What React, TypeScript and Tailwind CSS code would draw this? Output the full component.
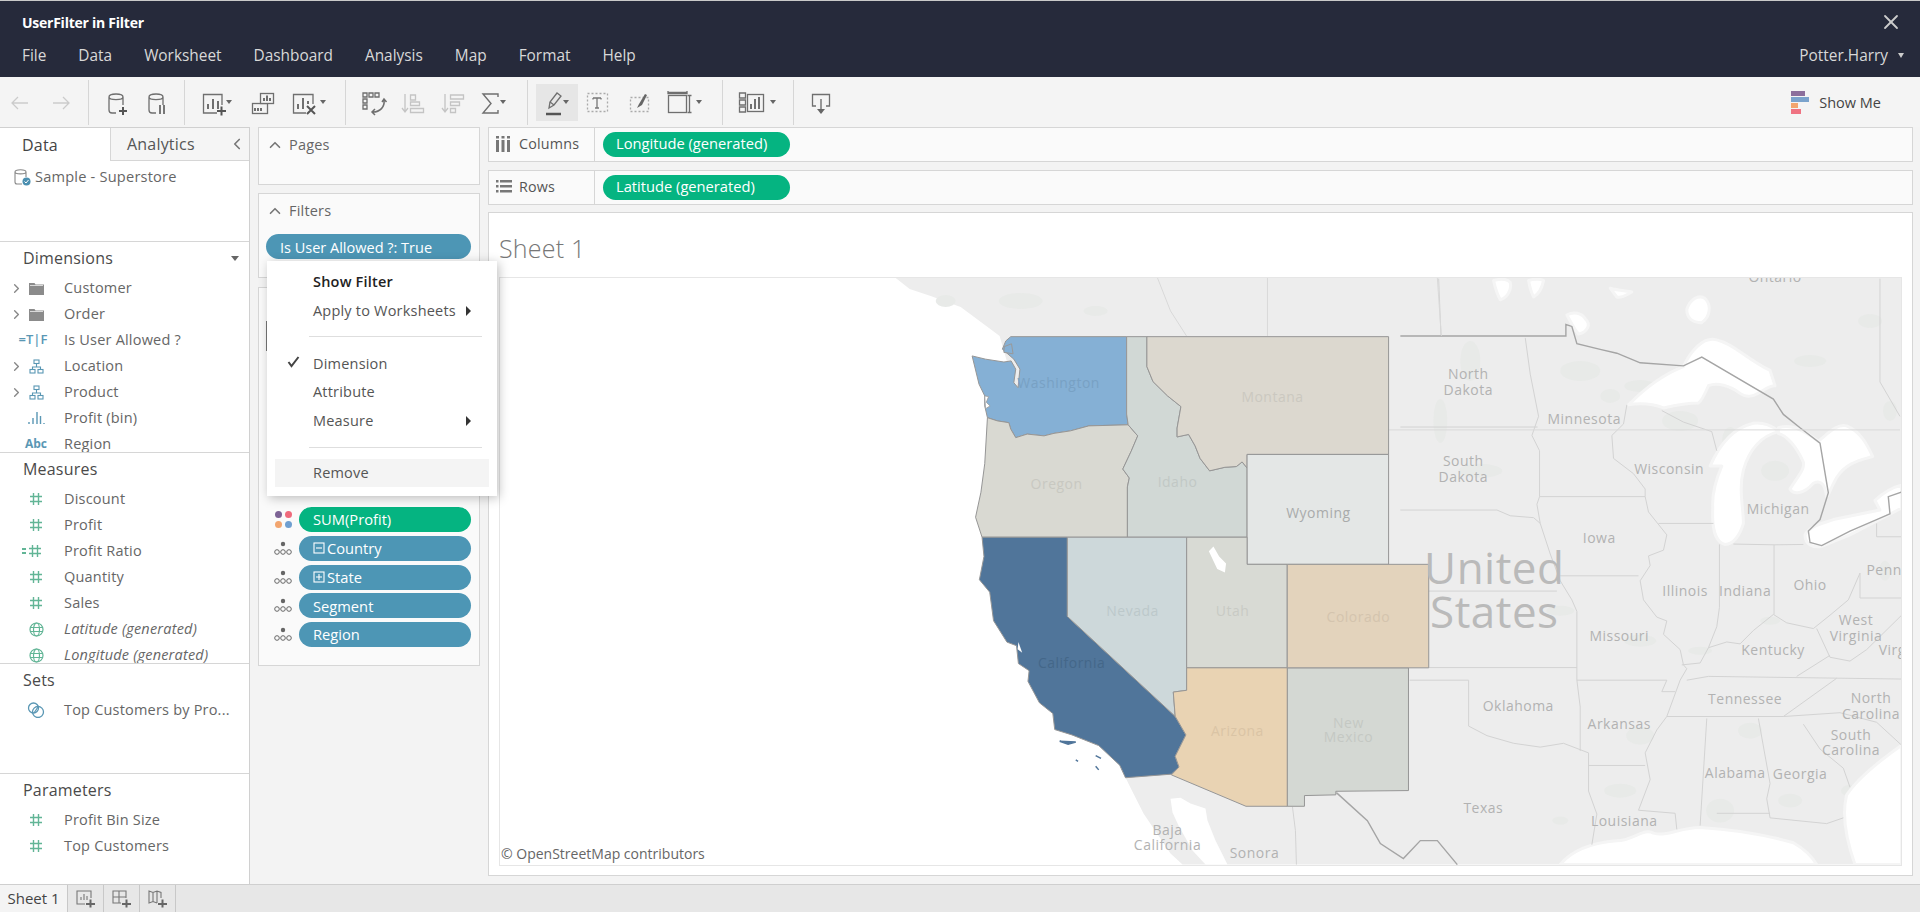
import { ChevronLeft, ChevronRight, ChevronUp, X } from 'lucide-react';
import type { ReactNode } from 'react';

const font = { fontFamily: '"Open Sans", "Noto Sans", sans-serif' };

function Svg({ children }: { children: ReactNode }) {
  return (
    <svg width="40" height="28" viewBox="0 0 40 28" fill="none" stroke="#6f6f6f" strokeWidth="1.3" className="overflow-visible">
      {children}
    </svg>
  );
}

function Caret({ x, y = 14 }: { x: number; y?: number }) {
  return <path d={`M${x - 3} ${y - 2}h6l-3 4z`} fill="#666" stroke="none" />;
}

function Sep() {
  return <div className="h-[45px] w-px shrink-0 self-start bg-[#d6d6d6]" />;
}

function Tool({ w, children }: { w: string; children?: ReactNode }) {
  return <div className={`flex h-[45px] shrink-0 items-center justify-center ${w}`}>{children}</div>;
}

function Toolbar() {
  return (
    <div className="flex h-[50px] items-start bg-[#f4f4f4] pt-[3px]">
      <Tool w="w-[40px]">
        <Svg><path d="M28 14H12M18 8l-6 6 6 6" stroke="#cbcbcb" /></Svg>
      </Tool>
      <Tool w="w-[42px]">
        <Svg><path d="M12 14h16M22 8l6 6-6 6" stroke="#cbcbcb" /></Svg>
      </Tool>
      <Tool w="w-[6px]" />
      <Sep />
      <Tool w="w-[54px]">
        <Svg>
          <path d="M13 8c0-4 14-4 14 0v8M13 8c0 3.5 14 3.5 14 0M13 8v13c0 2 1.500 3 3 3h4" />
          <path d="M23 22h8M27 18v8" stroke="#555" strokeWidth="2" />
        </Svg>
      </Tool>
      <Tool w="w-[26px]">
        <Svg>
          <path d="M13 8c0-4 14-4 14 0v8M13 8c0 3.500 14 3.500 14 0M13 8v13c0 2 1.500 3 3 3h4" />
          <path d="M24 16v9M28 16v9" stroke="#777" strokeWidth="2" />
        </Svg>
      </Tool>
      <Tool w="w-[15px]" />
      <Sep />
      <Tool w="w-[64px]">
        <Svg>
          <path d="M20 24H6.500V5.500H25V16" />
          <path d="M11 20v-5M16 20V10M21 20V12" strokeWidth="2" />
          <path d="M20 22h9M24.500 17.500v9" stroke="#555" strokeWidth="2" />
          <Caret x={32} y={13} />
        </Svg>
      </Tool>
      <Tool w="w-[26px]">
        <Svg>
          <rect x="10.500" y="14.500" width="15" height="10" />
          <rect x="18.500" y="4.500" width="13" height="10" fill="#f4f4f4" />
          <path d="M22 12V9M25 12V6.500M28 12V9M13 22v-3M16 22v-3M19 22v-3" strokeWidth="2" />
        </Svg>
      </Tool>
      <Tool w="w-[54px]">
        <Svg>
          <path d="M24 24H11.500V5.500H31V15" />
          <path d="M16 20v-5M21 20V9M26 15v-3" strokeWidth="2" />
          <path d="M25 17l8 8M33 17l-8 8" stroke="#555" strokeWidth="2" />
          <Caret x={41} y={13} />
        </Svg>
      </Tool>
      <Tool w="w-[16px]" />
      <Sep />
      <Tool w="w-[54px]">
        <Svg>
          <path d="M10 4h4v4h-4zM16 4h4v4h-4zM22 4h4v4h-4zM10 10h4v4h-4zM10 16h4v4h-4z" />
          <path d="M31 11c1 7-4 12-11 12M29 13l2-3 2.500 3M22 20l-3 3 3 3" strokeWidth="1.500" />
        </Svg>
      </Tool>
      <Tool w="w-[26px]">
        <Svg>
          <path d="M12 5v17M9 19l3 4 3-4" stroke="#c4c4c4" />
          <path d="M17.500 6h5v5h-5zM17.500 13h9v3.500h-9zM17.500 19.500h13v4h-13z" stroke="#c4c4c4" />
        </Svg>
      </Tool>
      <Tool w="w-[54px]">
        <Svg>
          <path d="M12 5v17M9 19l3 4 3-4" stroke="#c4c4c4" />
          <path d="M17.500 6h13v4h-13zM17.500 13h9v3.500h-9zM17.500 19.500h5v4h-5z" stroke="#c4c4c4" />
        </Svg>
      </Tool>
      <Tool w="w-[20px]">
        <Svg>
          <path d="M28 8V5H13l8 9.500-8 9.500h15v-3" strokeWidth="1.400" />
          <Caret x={33} y={13} />
        </Svg>
      </Tool>
      <Tool w="w-[27px]" />
      <Sep />
      <Tool w="w-[8px]" />
      <div className="-mt-[2px] flex h-[37px] w-[42px] shrink-0 translate-y-[6px] items-center justify-center bg-[#e6e6e6]">
        <Svg>
          <path d="M12 19l1-6 7-9 4 3-7 9z" />
          <path d="M13 13l4 3" />
          <path d="M9 25h15" stroke="#555" strokeWidth="2.500" />
          <Caret x={29} y={13} />
        </Svg>
      </div>
      <Tool w="w-[38px]">
        <Svg>
          <rect x="10.500" y="4.500" width="20" height="18" stroke="#aaa" strokeDasharray="2 2" />
          <path d="M16 9h8M16 9v1.500M24 9v1.500M20 9v10M18 19h4" stroke="#777" />
        </Svg>
      </Tool>
      <Tool w="w-[46px]">
        <Svg>
          <rect x="11.500" y="8.500" width="18" height="14" stroke="#aaa" strokeDasharray="2 2" />
          <path d="M18 19l2-4 6-10 2 1-5 10z" fill="#666" stroke="none" />
        </Svg>
      </Tool>
      <Tool w="w-[46px]">
        <Svg>
          <rect x="3.500" y="6.500" width="18" height="17" />
          <path d="M3 2v2.500h19V2M3 3.500h19M24.500 6.500v17M22.500 6.500h4M22.500 23.500h4" />
          <Caret x={34} y={13} />
        </Svg>
      </Tool>
      <Tool w="w-[14px]" />
      <Sep />
      <Tool w="w-[54px]">
        <Svg>
          <path d="M9.500 4h6v5h-6zM9.500 11h6v5h-6zM9.500 18h6v5h-6z" />
          <rect x="17.500" y="5.500" width="16" height="17" />
          <path d="M21 20v-5M25 20V10M29 20V8" strokeWidth="2" />
          <Caret x={43} y={13} />
        </Svg>
      </Tool>
      <Tool w="w-[16px]" />
      <Sep />
      <Tool w="w-[54px]">
        <Svg>
          <path d="M15 17h-3.500V5.500h17V17H25" />
          <path d="M20 10v14" strokeWidth="1.400" />
          <path d="M16 20h8l-4 5z" fill="#666" stroke="none" />
        </Svg>
      </Tool>
      <div className="ml-auto mr-[39px] mt-[11px] flex items-center gap-[10px]">
        <div className="flex w-[18px] flex-col gap-px">
          <div className="h-[5px] w-[14px] bg-[#8c6f9c]" />
          <div className="h-[5px] w-[18px] bg-[#7ba3cc]" />
          <div className="h-[5px] w-[7px] bg-[#f2a56f]" />
          <div className="h-[5px] w-[10px] bg-[#ef7382]" />
        </div>
        <span className="text-[14.500px] text-[#444]">Show Me</span>
      </div>
    </div>
  );
}

function Hash() {
  return (
    <svg width="14" height="14" viewBox="0 0 14 14" stroke="#62b596" strokeWidth="1.400" fill="none">
      <path d="M4.500 1v12M9.500 1v12M1 4.500h12M1 9.500h12" />
    </svg>
  );
}

function Globe() {
  return (
    <svg width="15" height="15" viewBox="0 0 15 15" stroke="#62b596" strokeWidth="1.200" fill="none">
      <circle cx="7.500" cy="7.500" r="6.500" />
      <ellipse cx="7.500" cy="7.500" rx="3" ry="6.500" />
      <path d="M1 5.500h13M1 9.500h13" />
    </svg>
  );
}

function Folder() {
  return (
    <svg width="15" height="13" viewBox="0 0 15 13" fill="#8b8b8b">
      <path d="M0 1h5.500l1 1.500H15V13H0z" />
      <path d="M1 3.500h13" stroke="#d9d9d9" />
    </svg>
  );
}

function Hier() {
  return (
    <svg width="15" height="15" viewBox="0 0 15 15" stroke="#5a97b4" strokeWidth="1.100" fill="none">
      <rect x="5" y="1" width="5" height="3.500" />
      <rect x="1" y="10.500" width="5" height="3.500" />
      <rect x="9" y="10.500" width="5" height="3.500" />
      <path d="M7.500 4.500v3.500M3.500 10.500V8h8v2.500" />
    </svg>
  );
}

function Row({ icon, label, caret, italic }: { icon: ReactNode; label: string; caret?: boolean; italic?: boolean }) {
  return (
    <div className="flex h-[26px] items-center pt-[2px]">
      <div className="flex w-[26px] justify-end">
        {caret && <ChevronRight size={15} strokeWidth={2.200} className="mr-[2px] text-[#888]" />}
      </div>
      <div className="flex w-[20px] justify-center">{icon}</div>
      <span className={`ml-[18px] text-[14.500px] tracking-[0.2px] text-[#666] ${italic ? 'italic' : ''}`}>{label}</span>
    </div>
  );
}

function Section({ title, h, children, arrow }: { title: string; h: string; children: ReactNode; arrow?: boolean }) {
  return (
    <div className={`overflow-hidden border-t border-[#d6d6d6] ${h}`}>
      <div className="flex h-[32px] items-center pl-[23px] pr-[10px] text-[16px] tracking-[0.2px] text-[#4a4a4a]">
        {title}
        {arrow && <div className="ml-auto h-0 w-0 border-x-[4px] border-t-[5px] border-x-transparent border-t-[#666]" />}
      </div>
      {children}
    </div>
  );
}

function DataPane() {
  return (
    <div className="flex w-[250px] shrink-0 flex-col border-r border-t border-[#d0d0d0] bg-white">
      <div className="flex h-[33px] shrink-0">
        <div className="flex w-[110px] items-center pl-[22px] text-[16px] tracking-[0.2px] text-[#444]">Data</div>
        <div className="flex flex-1 items-center border-b border-l border-[#d6d6d6] bg-[#f5f5f5] pl-[16px] text-[16px] tracking-[0.2px] text-[#555]">
          Analytics
          <ChevronLeft size={18} strokeWidth={2.200} className="ml-auto mr-[3px] text-[#777]" />
        </div>
      </div>
      <div className="flex h-[80px] shrink-0 items-start pl-[14px] pt-[7px]">
        <svg width="18" height="18" viewBox="0 0 18 18" fill="none" stroke="#888" strokeWidth="1.100">
          <path d="M1 4c0-3 11-3 11 0v5M1 4c0 2.500 11 2.500 11 0M1 4v10c0 1.500 1 2 2 2h5" />
          <circle cx="12.500" cy="13.500" r="4" fill="#4b8fb0" stroke="none" />
          <path d="M10.500 13.500l1.500 1.500 2.500-3" stroke="#fff" strokeWidth="1" />
        </svg>
        <span className="-mt-px ml-[3px] text-[14.600px] leading-[18px] tracking-[0.2px] text-[#666]">Sample - Superstore</span>
      </div>
      <Section title="Dimensions" h="h-[211px]" arrow>
        <Row caret icon={<Folder />} label="Customer" />
        <Row caret icon={<Folder />} label="Order" />
        <Row icon={<span className="-ml-[6px] text-[13px] font-semibold text-[#5a97b4]">=T|F</span>} label="Is User Allowed ?" />
        <Row caret icon={<Hier />} label="Location" />
        <Row caret icon={<Hier />} label="Product" />
        <Row
          icon={
            <svg width="18" height="14" viewBox="0 0 18 14" stroke="#5a97b4" strokeWidth="1.400">
              <path d="M2 13v-2M6 13V7M10 13V1M13.500 13V5M17 13v-1" />
            </svg>
          }
          label="Profit (bin)"
        />
        <Row icon={<span className="text-[12px] font-bold text-[#5a97b4]">Abc</span>} label="Region" />
      </Section>
      <Section title="Measures" h="h-[211px]">
        <Row icon={<Hash />} label="Discount" />
        <Row icon={<Hash />} label="Profit" />
        <Row
          icon={
            <span className="-ml-[8px] flex items-center gap-[2px]">
              <span className="h-[6px] w-[4px] border-y-2 border-[#62b596]" />
              <Hash />
            </span>
          }
          label="Profit Ratio"
        />
        <Row icon={<Hash />} label="Quantity" />
        <Row icon={<Hash />} label="Sales" />
        <Row italic icon={<Globe />} label="Latitude (generated)" />
        <Row italic icon={<Globe />} label="Longitude (generated)" />
      </Section>
      <Section title="Sets" h="h-[110px]">
        <Row
          icon={
            <svg width="18" height="16" viewBox="0 0 18 16" fill="none" stroke="#5a97b4" strokeWidth="1.300">
              <circle cx="6.500" cy="6" r="5" />
              <circle cx="11" cy="10" r="5.500" />
              <path d="M7 11l4-6" />
            </svg>
          }
          label="Top Customers by Pro..."
        />
      </Section>
      <Section title="Parameters" h="flex-1">
        <Row icon={<Hash />} label="Profit Bin Size" />
        <Row icon={<Hash />} label="Top Customers" />
      </Section>
    </div>
  );
}

function Card({ h, title, children }: { h: string; title?: string; children?: ReactNode }) {
  return (
    <div className={`border border-[#d6d6d6] bg-[#fafafa] ${h}`}>
      {title && (
        <div className="flex h-[33px] items-center pl-[7px] text-[14.500px] tracking-[0.2px] text-[#666]">
          <ChevronUp size={18} strokeWidth={2.200} className="mr-[5px] text-[#777]" />
          {title}
        </div>
      )}
      {children}
    </div>
  );
}

function Detail() {
  return (
    <svg width="18" height="15" viewBox="0 0 18 15" fill="none" stroke="#666" strokeWidth="1">
      <circle cx="9" cy="3" r="2.200" fill="#666" stroke="none" />
      <circle cx="3" cy="11" r="2.300" />
      <circle cx="9" cy="11" r="2.300" />
      <circle cx="15" cy="11" r="2.300" />
    </svg>
  );
}

function Pill({ label, green, icon }: { label: string; green?: boolean; icon?: ReactNode }) {
  return (
    <div className={`flex h-[25px] w-[172px] items-center rounded-full pl-[14px] text-[14.700px] leading-none text-white ${green ? 'bg-[#05b481]' : 'bg-[#4d96b5]'}`}>
      {icon}
      {label}
    </div>
  );
}

function MarkRow({ icon, ...p }: { icon: ReactNode; label: string; green?: boolean; icon2?: ReactNode }) {
  return (
    <div className="flex items-center">
      <div className="flex w-[32px] justify-center">{icon}</div>
      <Pill label={p.label} green={p.green} icon={p.icon2} />
    </div>
  );
}

function MiddlePane() {
  return (
    <div className="ml-[8px] flex w-[222px] shrink-0 flex-col">
      <Card h="h-[58px]" title="Pages" />
      <Card h="mt-[8px] h-[85px]" title="Filters">
        <div className="ml-[7px] mt-[7px] flex h-[25px] w-[205px] items-center rounded-full bg-[#4d96b5] pl-[14px] pt-[2px] text-[14.500px] text-white">
          Is User Allowed ?: True
        </div>
      </Card>
      <Card h="mt-[9px] h-[379px]">
        <div className="ml-[7px] mt-[33px] h-[30px] w-0 border-l border-[#777]" />
        <div className="mt-[156px] flex flex-col gap-[3.800px] pl-[8px]">
          <MarkRow
            green
            label="SUM(Profit)"
            icon={
              <div className="grid grid-cols-2 gap-[3px]">
                <div className="h-[7px] w-[7px] rounded-full bg-[#7d6395]" />
                <div className="h-[7px] w-[7px] rounded-full bg-[#ef6a7c]" />
                <div className="h-[7px] w-[7px] rounded-full bg-[#f2a56f]" />
                <div className="h-[7px] w-[7px] rounded-full bg-[#6f9fd0]" />
              </div>
            }
          />
          <MarkRow
            label="Country"
            icon={<Detail />}
            icon2={
              <svg width="12" height="12" viewBox="0 0 12 12" fill="none" stroke="#fff" strokeWidth="1.100" className="mr-[2px]">
                <rect x="1" y="1" width="10" height="10" />
                <path d="M3 6h6" />
              </svg>
            }
          />
          <MarkRow
            label="State"
            icon={<Detail />}
            icon2={
              <svg width="12" height="12" viewBox="0 0 12 12" fill="none" stroke="#fff" strokeWidth="1.100" className="mr-[2px]">
                <rect x="1" y="1" width="10" height="10" />
                <path d="M3 6h6M6 3v6" />
              </svg>
            }
          />
          <MarkRow label="Segment" icon={<Detail />} />
          <MarkRow label="Region" icon={<Detail />} />
        </div>
      </Card>
    </div>
  );
}

function MenuItem({ label, bold, check, sub, hi }: { label: string; bold?: boolean; check?: boolean; sub?: boolean; hi?: boolean }) {
  return (
    <div className={`relative flex h-[28px] items-center pl-[38px] pr-[18px] text-[14.500px] tracking-[0.2px] ${bold ? 'font-semibold text-[#222]' : 'text-[#555]'} ${hi ? 'bg-[#f4f4f4]' : ''}`}>
      {check && (
        <svg width="13" height="12" viewBox="0 0 13 12" className="absolute left-[12px] top-[6px]" fill="none" stroke="#444" strokeWidth="2">
          <path d="M1.500 6l3 4 7-9" />
        </svg>
      )}
      {label}
      {sub && <div className="ml-auto h-0 w-0 border-y-[5px] border-l-[5px] border-y-transparent border-l-[#333]" />}
    </div>
  );
}

function ContextMenu() {
  return (
    <div className="absolute left-[267px] top-[261px] z-10 h-[235px] w-[230px] bg-white pt-[7px] shadow-[2px_2px_10px_rgba(0,0,0,0.25)]">
      <div className="px-[8px]">
        <MenuItem bold label="Show Filter" />
        <div className="mt-px"><MenuItem sub label="Apply to Worksheets" /></div>
        <div className="ml-[34px] mr-[7px] mt-[11px] h-px bg-[#dedede]" />
        <div className="mt-[13px]"><MenuItem check label="Dimension" /></div>
        <MenuItem label="Attribute" />
        <div className="mt-px"><MenuItem sub label="Measure" /></div>
        <div className="ml-[34px] mr-[7px] mt-[12px] h-px bg-[#dedede]" />
        <div className="mt-[11px]"><MenuItem hi label="Remove" /></div>
      </div>
    </div>
  );
}

function Shelf({ icon, title, pill, mt }: { icon: ReactNode; title: string; pill: string; mt?: string }) {
  return (
    <div className={`flex h-[35px] border border-[#d6d6d6] bg-[#fafafa] ${mt ?? ''}`}>
      <div className="flex w-[106px] items-center border-r border-[#d6d6d6] pb-[2px] pl-[7px] text-[14.300px] tracking-[0.2px] text-[#555]">
        <div className="flex w-[23px] justify-start">{icon}</div>
        {title}
      </div>
      <div className="ml-[8px] mt-[4px] flex h-[25px] w-[187px] items-center rounded-full bg-[#05b481] pb-[2px] pl-[13px] text-[14.700px] text-white">
        {pill}
      </div>
    </div>
  );
}

// numbers below are measured off the picture, hence the two transforms on the groups
const g4 = 'translate(880 270) scale(0.3827 0.3571)';
const g5 = 'translate(1400 270) scale(0.3333 0.3827)';

const waOrBorder = 'L279,411 L305,420 L335,425 L340,443 L353,467 L383,457 L427,462 L453,455 L496,448 L544,434 L647,431';
const idMtBorder = 'L696,268 L712,310 L750,350 L785,380 L775,440 L775,465 L805,458 L822,490 L835,525 L860,560 L900,550 L930,548 L945,535 L958,552';
const idMtBack = 'L945,535 L930,548 L900,550 L860,560 L835,525 L822,490 L805,458 L775,465 L775,440 L785,380 L750,350 L712,310 L696,268';

const states = [
  { d: 'M1063,1112 L1380,1112 L1380,1456 L1190,1458 L1190,1468 L1108,1470 L1108,1500 L1063,1500 Z', c: '#d4d8d3' },
  { d: 'M340,184 L643,184 L643,401 L647,431 L544,434 L496,448 L453,455 L427,462 L383,457 L353,467 L340,443 L335,425 L305,420 L279,411 L272,378 L272,350 L257,317 L239,238 L274,247 L322,255 L341,252 L353,275 L348,313 L359,327 L364,275 L348,247 L318,219 L327,196 Z', c: '#85b0d5' },
  { d: `M279,411 ${waOrBorder} L672,462 L655,505 L633,555 L650,580 L645,605 L645,746 L265,746 L248,690 L262,620 L272,540 Z`, c: '#d9d9d2' },
  { d: `M643,184 L696,184 ${idMtBorder} L958,746 L645,746 L645,605 L650,580 L633,555 L655,505 L672,462 L647,431 L643,401 Z`, c: '#d1d8d5' },
  { d: `M696,184 L1328,184 L1328,514 L958,514 L958,552 ${idMtBack} Z`, c: '#dcd8cf' },
  { d: 'M958,514 L1328,514 L1328,822 L958,822 Z', c: '#e4e7e6' },
  { d: 'M265,746 L488,746 L488,968 L770,1248 L798,1300 L770,1360 L780,1390 L760,1410 L640,1420 L625,1385 L570,1330 L500,1300 L455,1285 L450,1240 L415,1210 L385,1150 L388,1120 L360,1100 L355,1050 L330,1040 L295,980 L285,900 L258,865 L270,800 Z', c: '#50759a' },
  { d: 'M488,746 L800,746 L800,1175 L765,1180 L770,1248 L488,968 Z', c: '#cdd8da' },
  { d: 'M800,746 L958,746 L958,822 L1063,822 L1063,1112 L800,1112 Z', c: '#d8dad4' },
  { d: 'M1063,822 L1433,822 L1433,1112 L1063,1112 Z', c: '#e3d3bc' },
  { d: 'M800,1112 L1063,1112 L1063,1500 L955,1500 L760,1412 L780,1390 L770,1360 L798,1300 L770,1248 L765,1180 L800,1175 Z', c: '#e9d3b3' },
];

const lakes = [
  'M685,350 C730,310 790,270 850,250 C870,210 910,170 950,180 C1000,190 1040,230 1110,260 L1125,300 C1090,300 1060,345 1020,320 C990,300 950,290 925,300 C915,320 905,340 895,345 C860,345 830,350 790,358 C750,345 720,345 685,350 Z',
  'M930,510 C960,450 1000,410 1060,398 C1090,395 1120,405 1135,420 C1090,430 1050,460 1030,520 C1015,570 1030,620 1030,660 C1020,690 1000,715 975,715 C945,710 935,670 938,620 C935,580 950,540 965,510 C950,510 940,510 930,510 Z',
  'M1135,410 C1170,400 1200,410 1255,445 C1290,420 1310,400 1340,405 C1380,420 1400,450 1418,485 C1380,495 1340,500 1310,540 C1290,570 1285,590 1280,590 C1275,560 1265,545 1240,555 C1210,585 1180,585 1170,570 C1190,540 1215,520 1210,500 C1190,460 1160,430 1135,425 Z',
  'M1215,690 C1230,665 1270,660 1300,650 L1440,625 L1425,600 C1450,580 1480,565 1505,560 L1505,620 L1350,690 L1265,720 C1240,725 1215,715 1215,690 Z',
  'M280,25 C300,20 320,20 330,30 C335,50 320,70 300,75 C290,60 285,45 280,25 Z',
  'M385,25 C400,20 420,20 430,25 C425,45 415,60 400,68 C392,55 388,40 385,25 Z',
  'M860,100 C870,75 895,60 915,72 C935,90 930,120 905,135 C880,135 860,125 860,100 Z',
  'M630,45 C650,50 675,52 695,55 C680,62 665,72 650,68 Z',
  'M500,115 C520,105 545,110 555,125 C575,140 560,160 535,165 C520,150 510,130 500,115 Z',
  'M480,1552 C520,1510 580,1495 650,1490 C700,1490 730,1455 760,1470 C800,1480 840,1455 900,1455 C1000,1460 1100,1475 1180,1495 C1210,1510 1235,1530 1250,1552 Z',
  'M1505,1240 C1440,1280 1370,1330 1340,1370 C1325,1420 1340,1490 1365,1552 L1505,1552 Z',
];

const stateLines = [
  'M0,408 L412,408',
  'M375,175 L390,270 L415,380 L395,430 L418,470 L418,590 L410,610 L420,660 L450,740 L480,810 L515,860 L530,890 L530,1070 L540,1140 L540,1255',
  'M0,625 L290,625 L330,640 L400,645 L420,660',
  'M80,837 L470,837',
  'M85,1037 L530,1037',
  'M28,1070 L205,1070 L205,1190 L260,1215 L340,1235 L420,1245 L490,1235 L565,1260 L565,1360 L590,1420 L575,1500',
  'M418,590 L735,590',
  'M480,797 L715,797',
  'M530,1070 L800,1070 L785,1100 L825,1100',
  'M565,1293 L735,1293',
  'M680,350 L670,400 L635,430 L640,490 L700,530 L735,570 L735,590 L745,630 L800,690 L790,730 L745,745 L750,770 L720,810 L730,860 L770,905 L800,915 L790,950 L840,990 L850,1030 L860,1040 L840,1070 L800,1165 L770,1200 L735,1260 L750,1330 L715,1410 L825,1418 L830,1460',
  'M785,365 L850,395 L935,420 L950,470',
  'M775,660 L940,660',
  'M1000,714 L1122,716 L1210,715',
  'M958,715 L958,880 L950,930 L925,985 L980,970 L1020,975 L1060,940 L1120,898 L1160,920 L1240,935 L1290,900 L1345,860 L1380,790 L1380,855 L1505,855',
  'M1122,716 L1122,898',
  'M845,1030 L900,1025 L925,985',
  'M860,1070 L925,1060 L1505,1067',
  'M800,1165 L1150,1165 L1310,1065',
  'M1150,1165 L1320,1155 L1430,1180 L1505,1240',
  'M1210,1185 L1260,1250 L1330,1300 L1350,1350',
  'M920,1170 L900,1450',
  'M1075,1170 L1110,1340 L1100,1380 L1110,1430 L1280,1445 L1330,1430',
  'M950,1418 L1110,1418',
  'M1250,935 L1290,1010 L1350,1020 L1400,990 L1505,900',
  'M1430,695 L1505,695 M1430,660 L1430,695',
  'M1440,20 L1440,290 L1500,380',
  'M115,20 L122,170',
  'M1190,1060 L1290,1005',
];

const blobs = [
  [1020, 300, 22, 8], [945, 300, 10, 6], [1095, 310, 12, 5], [1310, 480, 18, 12], [1360, 520, 10, 20], [1290, 540, 20, 7],
  [1470, 360, 10, 20], [1580, 370, 20, 10], [1610, 395, 10, 7], [1680, 420, 18, 10], [1730, 440, 8, 14], [1640, 385, 16, 6],
  [1480, 470, 22, 7], [1440, 420, 7, 22], [1560, 610, 14, 5], [1640, 640, 16, 6], [1640, 735, 14, 9], [1750, 730, 12, 8],
  [1620, 790, 16, 7], [1720, 810, 14, 12], [1790, 800, 12, 7], [1850, 790, 9, 6], [1700, 650, 12, 4], [1770, 620, 10, 4],
  [1775, 470, 14, 10], [1890, 410, 7, 10], [1885, 570, 6, 10], [1810, 360, 16, 6], [1870, 320, 12, 7], [1560, 820, 8, 4],
];

const labels: [string, number, number, number?, string?][] = [
  ['North', 1468, 378], ['Dakota', 1468, 394], ['South', 1463, 465], ['Dakota', 1463, 481], ['Minnesota', 1584, 423],
  ['Wisconsin', 1669, 473], ['Michigan', 1778, 513], ['Iowa', 1599, 542], ['Illinois', 1685, 595], ['Indiana', 1745, 595],
  ['Ohio', 1810, 589], ['Pennsylvania', 1912, 574], ['Missouri', 1619, 640], ['Kentucky', 1773, 654], ['West', 1856, 624],
  ['Virginia', 1856, 640], ['Virginia', 1905, 654], ['Oklahoma', 1518, 710], ['Tennessee', 1745, 703], ['North', 1871, 702],
  ['Carolina', 1871, 718], ['South', 1851, 739], ['Carolina', 1851, 754], ['Arkansas', 1619, 728], ['Alabama', 1735, 777],
  ['Georgia', 1800, 778], ['Texas', 1483, 812], ['Louisiana', 1624, 825], ['Baja', 1167, 834], ['California', 1167, 849],
  ['Sonora', 1254, 857], ['Ontario', 1775, 281], ['Wyoming', 1318, 517, 14, '#a9abab'], ['United', 1494, 583, 44, '#bababa'], ['States', 1494, 627, 44, '#bababa'],
  ['Washington', 1058, 387, 14, '#78a1c4'], ['Montana', 1272, 401, 14, '#cbc8c0'], ['Oregon', 1056, 488, 14, '#c8c8c1'], ['Idaho', 1177, 486, 14, '#c1c8c5'],
  ['Nevada', 1132, 615, 14, '#bcc8ca'], ['Utah', 1232, 615, 14, '#c8cac4'], ['Colorado', 1358, 621, 14, '#d4c4ae'], ['California', 1071, 667, 14, '#446789'],
  ['Arizona', 1237, 735, 14, '#dac4a5'], ['New', 1348, 727, 14, '#c4c8c3'], ['Mexico', 1348, 741, 14, '#c4c8c3'],
];

function MapChart() {
  return (
    <svg viewBox="499 277 1402 587" className="h-full w-full" preserveAspectRatio="none">
      <path d="M895,277 L1901,277 L1901,864 L1182,864 L1170,853 L1143,813 L1133,793 L1125,777 L999,335 L991,329 L960,306 L930,295 L909,288 Z" fill="#ededed" />
      {blobs.map(([cx, cy, rx, ry], i) => (
        <ellipse key={i} cx={cx} cy={cy} rx={rx} ry={ry} fill="#e8eae8" />
      ))}
      <path d="M1170,798 L1180,797 L1190,803 L1205,808 L1207,820 L1215,840 L1227,864 L1205,864 L1192,850 L1178,825 L1172,812 Z" fill="#fff" />
      <g transform={g5}>
        {lakes.map((d) => (
          <path key={d} d={d} fill="#fff" stroke="#f5f5f5" strokeWidth="3" strokeLinejoin="round" vectorEffect="non-scaling-stroke" />
        ))}
        {stateLines.map((d) => (
          <path key={d} d={d} fill="none" stroke="#d3d3d3" strokeWidth="1" vectorEffect="non-scaling-stroke" />
        ))}
        <path
          d="M0,170 L497,170 L497,140 L515,145 L530,190 L600,205 L650,215 L720,240 L850,248 L905,225 L1120,335 L1150,375 L1200,410 L1260,450 L1285,580 L1260,650 L1225,680 L1230,710 L1265,718 L1350,680 L1470,635 L1465,590 L1505,578"
          fill="none"
          stroke="#a5a5a5"
          strokeWidth="1.400"
          vectorEffect="non-scaling-stroke"
        />
      </g>
      <path d="M1336,792 L1367,820 L1380,843 L1403,858 L1420,840 L1437,840 L1457,864" fill="none" stroke="#a5a5a5" strokeWidth="1.400" />
      <path d="M1292,806 L1295,830 L1296,864" fill="none" stroke="#d3d3d3" />
      <path d="M1157,277 L1170,310 L1186,335 M1267,277 L1267,335 M1437,277 L1441,335 M1386,490 L1386,335 M1386,429 L1900,429" fill="none" stroke="#d9d9d9" />
      <g transform={g4}>
        {states.map((s) => (
          <path key={s.d} d={s.d} fill={s.c} stroke="#969696" strokeWidth="1" vectorEffect="non-scaling-stroke" />
        ))}
        <path d="M858,785 L870,772 L885,800 L903,820 L900,845 L880,835 Z" fill="#fff" />
        <path d="M323,212 L342,204 L346,232 L322,228 Z" fill="#85b0d5" stroke="#999" strokeWidth="1" vectorEffect="non-scaling-stroke" />
        <path d="M272,350 L282,352 L276,368 L286,378 L274,386 Z" fill="#fff" stroke="#999" strokeWidth="0.800" vectorEffect="non-scaling-stroke" />
        <path d="M360,1040 L370,1070 L358,1060 Z" fill="#fff" />
        <path d="M468,1318 L510,1320 L490,1326 Z M510,1370 L516,1374 M562,1358 L576,1366 M562,1388 L570,1398" fill="#50759a" stroke="#50759a" strokeWidth="1.500" vectorEffect="non-scaling-stroke" />
      </g>
      {labels.map(([t, x, y, size, fill], i) => (
        <text key={i} x={x} y={y} textAnchor="middle" fontSize={size ?? 14} fill={fill ?? '#b2b2b2'} letterSpacing="0.5" style={{ fontFamily: '"Open Sans", sans-serif' }}>
          {t}
        </text>
      ))}
    </svg>
  );
}

function View() {
  return (
    <div className="mt-[7px] flex h-[664px] flex-col border border-[#d6d6d6] bg-white px-[10px] pb-[10px]">
      <div className="flex h-[64px] shrink-0 items-center pt-[7px] text-[25px] font-light tracking-[0.2px] text-[#777]">Sheet 1</div>
      <div className="relative flex-1 border border-[#e6e6e6]">
        <MapChart />
        <div className="absolute bottom-[2px] left-px bg-white/60 text-[14px] leading-[18px] text-[#666]">© OpenStreetMap contributors</div>
      </div>
    </div>
  );
}

function SheetTab({ children }: { children: ReactNode }) {
  return <div className="flex w-[36px] items-center justify-center border-r border-[#c8c8c8]">{children}</div>;
}

function BottomBar() {
  return (
    <div className="flex h-[28px] shrink-0 border-t border-[#cfcfcf] bg-[#e7e7e7]">
      <div className="flex w-[68px] items-center justify-center border-r border-[#c8c8c8] bg-[#f4f4f4] text-[15px] text-[#444]">Sheet 1</div>
      <SheetTab>
        <svg width="20" height="18" viewBox="0 0 20 18" fill="none" stroke="#777" strokeWidth="1.100">
          <path d="M9 14H1V1h14v7" />
          <path d="M5 10V7M8 10V4M11 10V6" />
          <path d="M10 14h9M14.500 9.500v8" stroke="#666" strokeWidth="2" />
        </svg>
      </SheetTab>
      <SheetTab>
        <svg width="20" height="18" viewBox="0 0 20 18" fill="none" stroke="#777" strokeWidth="1.100">
          <path d="M9 13H1V1h13v7M1 7h13M7 1v12" />
          <path d="M10 14h9M14.500 9.500v8" stroke="#666" strokeWidth="2" />
        </svg>
      </SheetTab>
      <SheetTab>
        <svg width="20" height="18" viewBox="0 0 20 18" fill="none" stroke="#777" strokeWidth="1.100">
          <path d="M9 13l-4-1.500L1 13V1l4 1.500L9 1l4 1.500V8M5 2.500v9M9 1v12" />
          <path d="M10 14h9M14.500 9.500v8" stroke="#666" strokeWidth="2" />
        </svg>
      </SheetTab>
    </div>
  );
}

export default function App() {
  return (
    <div className="relative flex h-[912px] w-[1920px] flex-col overflow-hidden bg-[#f3f3f3]" style={font}>
      <div className="h-[77px] shrink-0 border-t border-[#c9c9c9] bg-[#262a3b] px-[22px] text-white">
        <div className="flex h-[42px] items-center">
          <span className="text-[14px] font-bold tracking-[-0.25px]">UserFilter in Filter</span>
          <X size={24} strokeWidth={1.800} className="ml-auto -mr-[5px] text-[#ccc]" />
        </div>
        <div className="flex h-[26px] items-center gap-[32px] text-[15.400px] text-[#d8d8d8]">
          <span>File</span>
          <span>Data</span>
          <span>Worksheet</span>
          <span>Dashboard</span>
          <span>Analysis</span>
          <span>Map</span>
          <span>Format</span>
          <span>Help</span>
          <span className="ml-auto flex items-center gap-[10px]">
            Potter.Harry
            <span className="-mr-[6px] h-0 w-0 border-x-[3px] border-t-[5px] border-x-transparent border-t-[#ccc]" />
          </span>
        </div>
      </div>
      <Toolbar />
      <div className="flex min-h-0 flex-1">
        <DataPane />
        <MiddlePane />
        <div className="ml-[8px] w-[1425px] shrink-0">
          <Shelf
            title="Columns"
            pill="Longitude (generated)"
            icon={
              <svg width="14" height="16" viewBox="0 0 14 16" fill="#777">
                <path d="M0 4h3v12H0zM5.500 4h3v12h-3zM11 4h3v12h-3zM0 0h3v2.500H0zM5.500 0h3v2.500h-3zM11 0h3v2.500h-3z" />
              </svg>
            }
          />
          <Shelf
            mt="mt-[8px]"
            title="Rows"
            pill="Latitude (generated)"
            icon={
              <svg width="16" height="13" viewBox="0 0 16 13" fill="#777">
                <path d="M0 0h2.500v2.500H0zM0 5h2.500v2.500H0zM0 10h2.500v2.500H0zM4 0h12v2.500H4zM4 5h12v2.500H4zM4 10h12v2.500H4z" />
              </svg>
            }
          />
          <View />
        </div>
      </div>
      <BottomBar />
      <ContextMenu />
    </div>
  );
}
